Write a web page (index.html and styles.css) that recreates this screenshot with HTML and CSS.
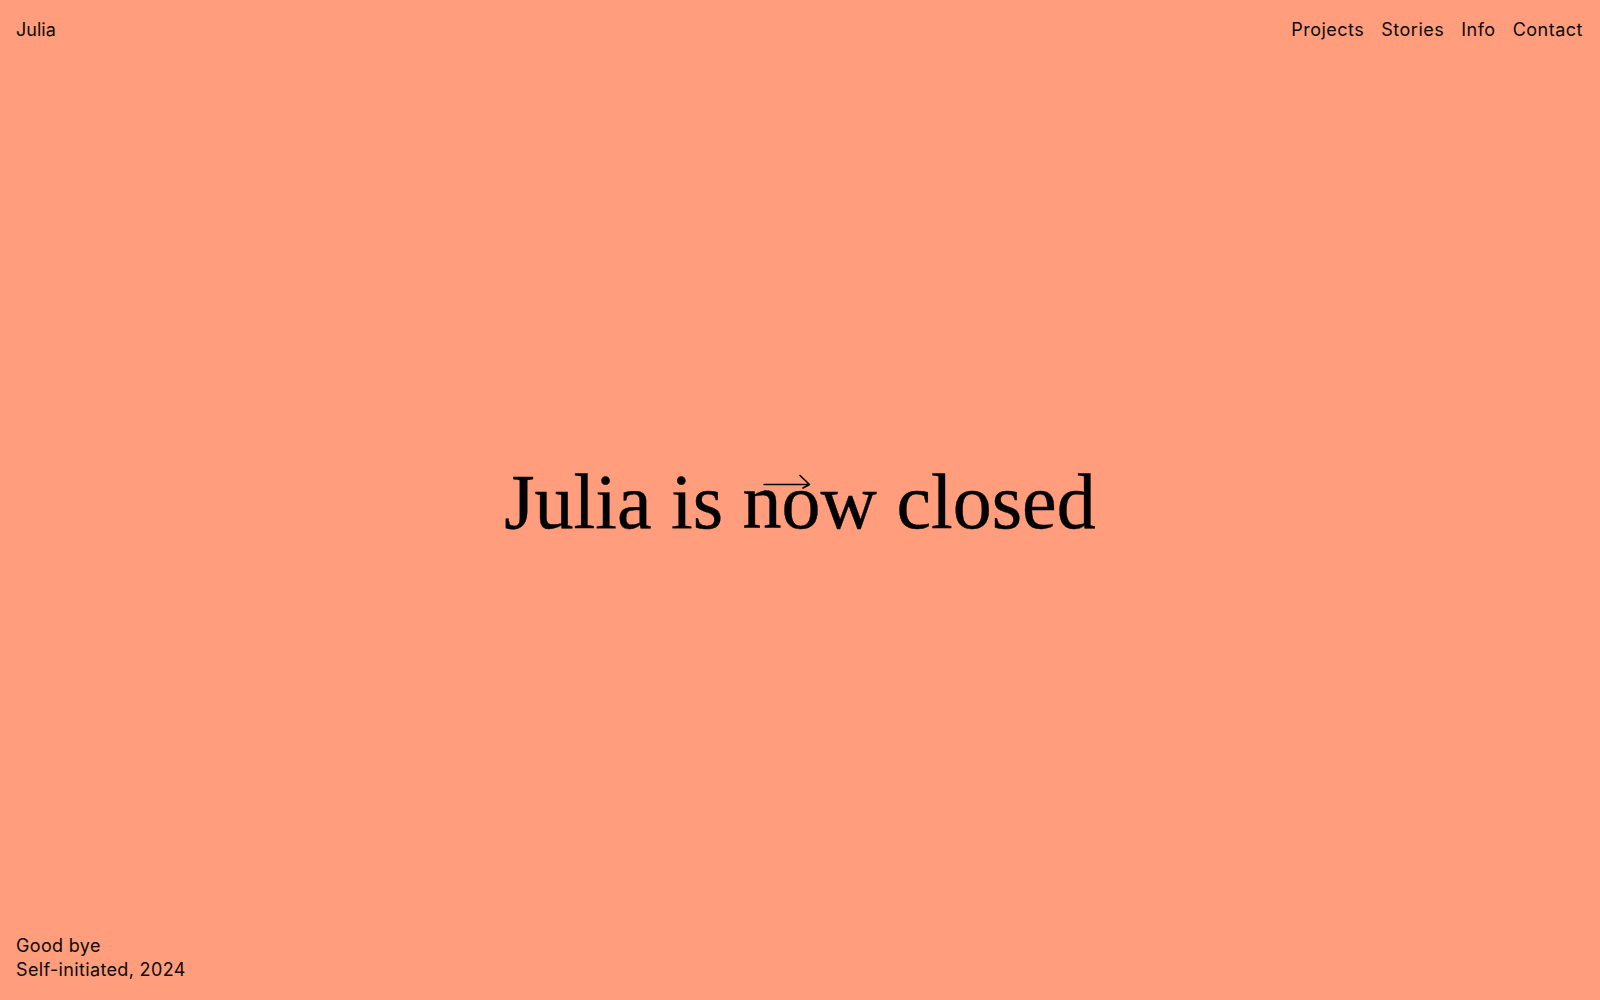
FILE: index.html
```html
<!DOCTYPE html>
<html lang="en">
<head>
<meta charset="utf-8">
<title>Julia</title>
<link rel="stylesheet" href="styles.css">
</head>
<body>
<div class="page">
  <header class="top">
    <a class="brand" href="#">Julia</a>
    <nav class="nav">
      <a href="#">Projects</a>
      <a href="#">Stories</a>
      <a href="#">Info</a>
      <a href="#">Contact</a>
    </nav>
  </header>
  <main class="center">
    <h1 class="headline">Julia is <span class="now">now<svg class="arrow" width="50" height="16" viewBox="0 0 50 16" aria-hidden="true"><path d="M1 10.5 H46.5 M37 1.5 L46.5 10.5 L40 14" fill="none" stroke="#000" stroke-width="1.6" stroke-linecap="round" stroke-linejoin="round"/></svg></span> closed</h1>
  </main>
  <footer class="bottom">
    <p>Good bye</p>
    <p>Self-initiated, 2024</p>
  </footer>
</div>
</body>
</html>
```

FILE: styles.css
```css
html, body {
  margin: 0;
  padding: 0;
  background: #ff9d7d;
  color: #0a0a0a;
}

.page {
  height: 100vh;
  display: grid;
  grid-template-rows: 1fr auto 1fr;
  font-family: Inter, "Liberation Sans", sans-serif;
  font-size: 18px;
  line-height: 24px;
  letter-spacing: 0.35px;
}

.top {
  align-self: start;
  display: flex;
  justify-content: space-between;
  padding: 18px 17px 0 16px;
}

.top a {
  color: inherit;
  text-decoration: none;
}

.brand {
  letter-spacing: 0;
}

.nav {
  display: flex;
  gap: 17px;
  letter-spacing: 0.5px;
}

.center {
  display: flex;
  justify-content: center;
  padding-top: 4px;
}

.headline {
  margin: 0;
  font-family: "Liberation Serif", "Times New Roman", serif;
  font-weight: 400;
  font-size: 78px;
  line-height: 1;
  letter-spacing: 0;
  color: #000;
  white-space: nowrap;
  -webkit-text-stroke: 0.4px #000;
}

.now {
  position: relative;
}

.arrow {
  position: absolute;
  left: 20px;
  top: 16px;
}

.bottom {
  align-self: end;
  padding: 0 16px 18px 16px;
}

.bottom p {
  margin: 0;
}
```
